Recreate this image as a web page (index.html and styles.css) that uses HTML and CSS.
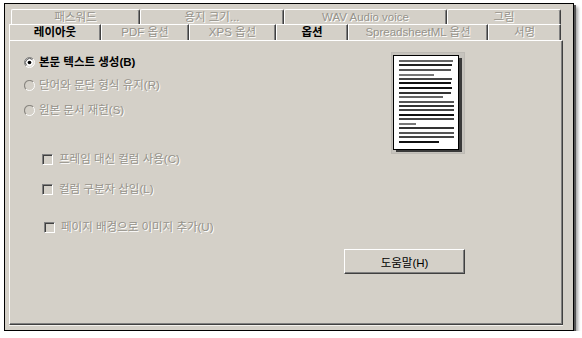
FILE: index.html
```html
<!DOCTYPE html>
<html lang="ko">
<head>
<meta charset="utf-8">
<link rel="stylesheet" href="styles.css">
</head>
<body>
<div class="frame">
  <div class="tabrow row1">
    <div class="tab w129 dim">패스워드</div>
    <div class="tab w144 dim">용지 크기...</div>
    <div class="tab w163 dim">WAV Audio voice</div>
    <div class="tab w114 dim">그림</div>
  </div>
  <div class="tabrow row2">
    <div class="tab w92 active">레이아웃</div>
    <div class="tab w88 dim">PDF 옵션</div>
    <div class="tab w87 dim">XPS 옵션</div>
    <div class="tab w72 bold">옵션</div>
    <div class="tab w140 dim">SpreadsheetML 옵션</div>
    <div class="tab w73 dim">서명</div>
  </div>
  <div class="panel">
    <div class="options">
      <div class="radio r1">
        <svg class="rb" width="11" height="11" viewBox="0 0 12 12">
          <circle cx="6" cy="6" r="5" fill="#fff"/>
          <path d="M2.11 9.89 A5.5 5.5 0 0 1 9.89 2.11" fill="none" stroke="#808080"/>
          <path d="M9.89 2.11 A5.5 5.5 0 0 1 2.11 9.89" fill="none" stroke="#fff"/>
          <path d="M2.82 9.18 A4.5 4.5 0 0 1 9.18 2.82" fill="none" stroke="#404040"/>
          <path d="M9.18 2.82 A4.5 4.5 0 0 1 2.82 9.18" fill="none" stroke="#d4d0c8"/>
          <circle cx="6" cy="6" r="2" fill="#000"/>
        </svg>
        <span class="label strong">본문 텍스트 생성(B)</span>
      </div>
      <div class="radio r2">
        <svg class="rb" width="11" height="11" viewBox="0 0 12 12">
          <circle cx="6" cy="6" r="5" fill="#d4d0c8"/>
          <path d="M2.11 9.89 A5.5 5.5 0 0 1 9.89 2.11" fill="none" stroke="#8c8983" stroke-width="1.3"/>
          <path d="M9.89 2.11 A5.5 5.5 0 0 1 2.11 9.89" fill="none" stroke="#fff"/>
        </svg>
        <span class="label dis">단어와 문단 형식 유지(R)</span>
      </div>
      <div class="radio r3">
        <svg class="rb" width="11" height="11" viewBox="0 0 12 12">
          <circle cx="6" cy="6" r="5" fill="#d4d0c8"/>
          <path d="M2.11 9.89 A5.5 5.5 0 0 1 9.89 2.11" fill="none" stroke="#8c8983" stroke-width="1.3"/>
          <path d="M9.89 2.11 A5.5 5.5 0 0 1 2.11 9.89" fill="none" stroke="#fff"/>
        </svg>
        <span class="label dis">원본 문서 재현(S)</span>
      </div>
      <div class="check c1"><span class="box"></span><span class="label dis">프레임 대신 컬럼 사용(C)</span></div>
      <div class="check c2"><span class="box"></span><span class="label dis">컬럼 구분자 삽입(L)</span></div>
      <div class="check c3"><span class="box"></span><span class="label dis">페이지 배경으로 이미지 추가(U)</span></div>
    </div>
    <div class="side">
      <svg class="doc" width="74" height="102" viewBox="0 0 74 102">
        <rect x="0" y="0" width="74" height="102" fill="#bdbab4"/>
        <rect x="1" y="1" width="72" height="100" fill="#c6c3bd"/>
        <rect x="5" y="6" width="66" height="94" fill="#3a3a3a"/>
        <rect x="2.5" y="3.5" width="65" height="94" fill="#fff" stroke="#000"/>
        <rect x="8" y="8" width="54" height="2" fill="#666"/>
        <rect x="8" y="12" width="53" height="2" fill="#222"/>
        <rect x="8" y="17" width="52" height="2" fill="#555"/>
        <rect x="8" y="22" width="35" height="2" fill="#777"/>
        <rect x="8" y="26" width="53" height="2" fill="#444"/>
        <rect x="8" y="30" width="52" height="2" fill="#111"/>
        <rect x="8" y="35" width="53" height="2" fill="#111"/>
        <rect x="8" y="40" width="52" height="2" fill="#333"/>
        <rect x="8" y="44" width="44" height="2" fill="#666"/>
        <rect x="8" y="49" width="55" height="2" fill="#555"/>
        <rect x="8" y="53" width="55" height="2" fill="#333"/>
        <rect x="8" y="57" width="55" height="2" fill="#444"/>
        <rect x="8" y="62" width="55" height="2" fill="#111"/>
        <rect x="8" y="66" width="55" height="2" fill="#444"/>
        <rect x="8" y="71" width="17" height="2" fill="#777"/>
        <rect x="8" y="75" width="55" height="2" fill="#333"/>
        <rect x="8" y="80" width="55" height="2" fill="#555"/>
        <rect x="8" y="84" width="55" height="2" fill="#444"/>
        <rect x="8" y="89" width="40" height="2" fill="#111"/>
      </svg>
      <button class="btn">도움말(H)</button>
    </div>
  </div>
</div>
</body>
</html>
```
FILE: styles.css
```css
html, body {
  margin: 0;
  padding: 0;
  background: #fff;
}
body {
  font-family: "Liberation Sans", "Noto Sans CJK KR", sans-serif;
  font-size: 11.5px;
  color: #000;
}
.frame {
  box-sizing: border-box;
  margin: 3px 0 0 4px;
  width: 570px;
  height: 328px;
  background: #d4d0c8;
  border: 1px solid #000;
  box-shadow: 2px 2px 0 #555, 4px 4px 3px rgba(0,0,0,0.35);
}
.tabrow {
  display: flex;
}
.row1 {
  margin: 5px 0 0 6px;
  height: 15px;
}
.row2 {
  margin-left: 4px;
  height: 16px;
}
.tab {
  box-sizing: border-box;
  height: 100%;
  border-top: 1px solid #fff;
  border-left: 1px solid #fff;
  border-right: 1px solid #404040;
  box-shadow: inset -1px 0 0 #808080;
  display: flex;
  align-items: center;
  justify-content: center;
  line-height: 13px;
  white-space: nowrap;
}
.row1 .tab { border-radius: 2px 2px 0 0; }
.w129 { width: 129px; }
.w144 { width: 144px; }
.w163 { width: 163px; }
.w114 { width: 114px; }
.w92 { width: 92px; }
.w88 { width: 88px; }
.w87 { width: 87px; }
.w72 { width: 72px; }
.w140 { width: 140px; }
.w73 { width: 73px; }
.dim {
  color: #96938b;
  text-shadow: 1px 1px 0 #fff;
}
.active, .bold {
  font-weight: bold;
}
.panel {
  box-sizing: border-box;
  margin-left: 4px;
  width: 554px;
  height: 285px;
  border-top: 1px solid #fff;
  border-left: 1px solid #fff;
  border-right: 1px solid #404040;
  border-bottom: 1px solid #404040;
  box-shadow: inset -1px -1px 0 #808080, 0 1px 0 #f4f2ee;
  display: grid;
  grid-template-columns: 1fr auto;
}
.options {
  display: flex;
  flex-direction: column;
  padding-left: 14px;
}
.radio, .check {
  display: flex;
  align-items: center;
  height: 14px;
  line-height: 14px;
  white-space: nowrap;
}
.rb {
  flex: none;
  margin-right: 4px;
}
.r1 { margin-top: 14px; }
.r2 { margin-top: 9px; }
.r3 { margin-top: 11px; }
.check { padding-left: 18px; }
.c1 { margin-top: 35px; }
.c2 { margin-top: 16px; }
.c3 { margin-top: 24px; padding-left: 20px; }
.box {
  box-sizing: border-box;
  flex: none;
  width: 11px;
  height: 11px;
  border-top: 1px solid #808080;
  border-left: 1px solid #808080;
  border-right: 1px solid #fff;
  border-bottom: 1px solid #fff;
  box-shadow: inset 1px 1px 0 #404040;
  background: #d4d0c8;
  margin-right: 6px;
}
.label.strong {
  font-weight: bold;
}
.label.dis {
  color: #96938b;
  text-shadow: 1px 1px 0 #fff;
}
.side {
  display: flex;
  flex-direction: column;
  align-items: flex-end;
  padding-right: 97px;
}
.doc {
  display: block;
  margin-top: 11px;
}
.btn {
  box-sizing: border-box;
  margin-top: 95px;
  width: 121px;
  height: 25px;
  padding: 0;
  background: #d4d0c8;
  border-top: 1px solid #fff;
  border-left: 1px solid #fff;
  border-right: 1px solid #404040;
  border-bottom: 1px solid #404040;
  box-shadow: inset -1px -1px 0 #808080;
  font-family: "Liberation Sans", "Noto Sans CJK KR", sans-serif;
  font-size: 11.5px;
  color: #000;
}
```
